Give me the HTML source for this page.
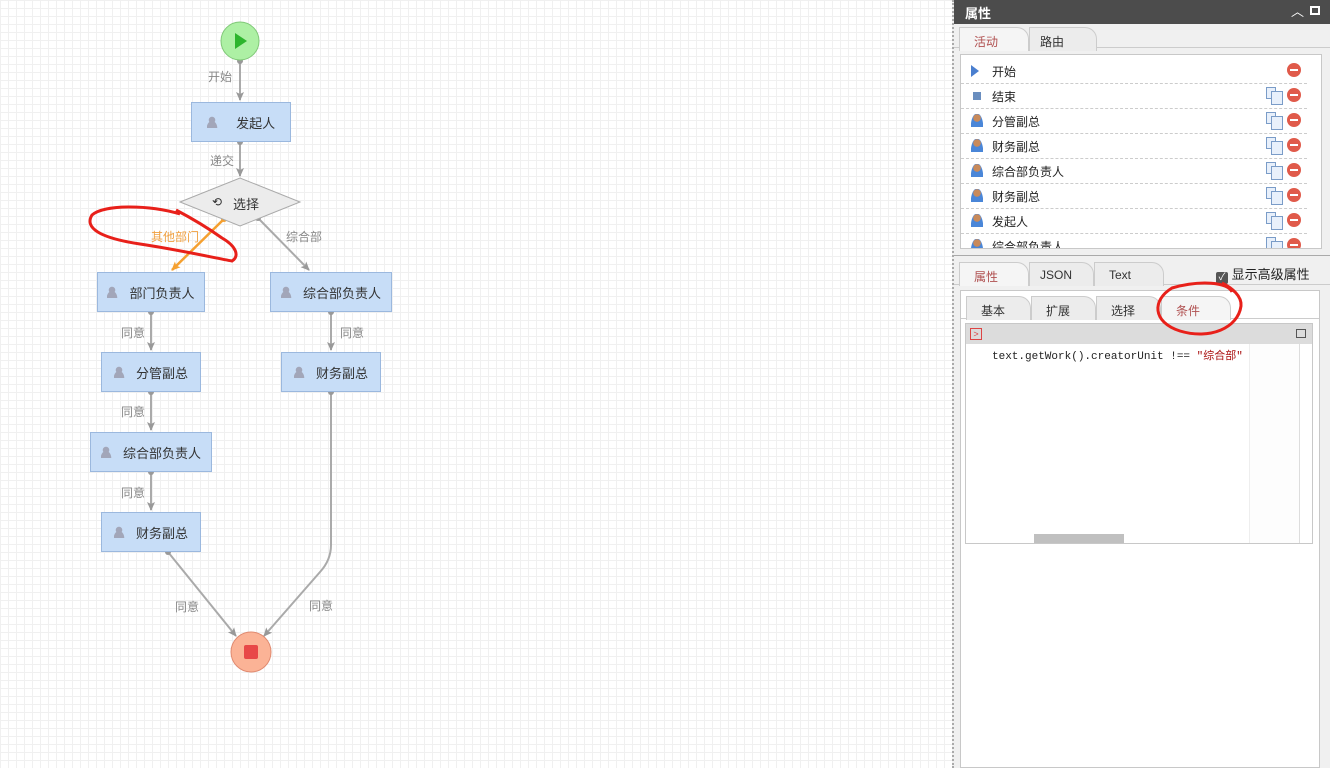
<!DOCTYPE html><html><head><meta charset="utf-8"><style>
*{margin:0;padding:0;box-sizing:border-box}
body{width:1330px;height:768px;overflow:hidden;position:relative;font-family:"Liberation Sans","Noto Sans CJK SC",sans-serif;font-size:13px;color:#333;
background-color:#fff;background-image:linear-gradient(#f0f0f0 1px,transparent 1px),linear-gradient(90deg,#f0f0f0 1px,transparent 1px);background-size:8px 8px}
.abs{position:absolute}
.box{position:absolute;background:#c7ddf7;border:1px solid #9bb8de;display:flex;align-items:center;justify-content:center;font-size:13px;color:#333}
.box i{display:inline-block;width:14px;height:12px;margin-right:8px;background:radial-gradient(circle at 5px 4px,#99a 3px,transparent 3.5px),radial-gradient(ellipse at 5px 12px,#99a 5px,transparent 5.5px);opacity:.8}
.lbl{position:absolute;font-size:12px;color:#888}
#panel{position:absolute;left:952px;top:0;width:378px;height:768px;background:#f0f0f0;border-left:2px dotted #aaa}
.tab{position:absolute;height:24px;border:1px solid #ccc;border-bottom:none;border-radius:0 12px 0 0;background:#ececec;font-size:12px;padding:5px 0 0 14px}
.row{position:absolute;left:0;width:346px;height:25px;border-bottom:1px dashed #ccc;font-size:12px;color:#222;padding:4px 0 0 31px}
.row .ic{position:absolute;left:10px;top:5px}
.del{position:absolute;left:326px;top:4px;width:14px;height:14px;border-radius:50%;background:#e05a4a}
.del:after{content:"";position:absolute;left:3px;top:6px;width:8px;height:2px;background:#fff}
.cp{position:absolute;left:305px;top:3px;width:10px;height:12px;border:1px solid #7a9cc8;background:#e8f0fb}
.cp:after{content:"";position:absolute;left:4px;top:3px;width:10px;height:12px;border:1px solid #7a9cc8;background:#e8f0fb}
.usr{width:12px;height:13px;background:radial-gradient(circle at 6px 4px,#c98a5a 3.5px,transparent 4px),radial-gradient(ellipse at 6px 13px,#4a86d8 6px,transparent 6.5px)}
</style></head><body>
<svg class="abs" style="left:0;top:0" width="950" height="768">
<defs><marker id="a" markerWidth="10" markerHeight="10" refX="8" refY="5" orient="auto" markerUnits="userSpaceOnUse"><path d="M0,1 L9,5 L0,9 L2,5Z" fill="#999"/></marker>
<marker id="o" markerWidth="10" markerHeight="10" refX="8" refY="5" orient="auto" markerUnits="userSpaceOnUse"><path d="M0,1 L9,5 L0,9 L2,5Z" fill="#f5a030"/></marker></defs>
<g stroke="#aaa" stroke-width="2" fill="none" marker-end="url(#a)">
<path d="M240,61 V100"/><path d="M240,142 V176"/><path d="M258,218 L309,270"/>
<path d="M151,312 V350"/><path d="M331,312 V350"/><path d="M151,392 V430"/><path d="M151,472 V510"/>
<path d="M168,552 L236,636"/><path d="M331,392 V545 Q331,560 320,572 L264,636"/>
</g>
<path d="M224,219 L172,270" stroke="#f5a030" stroke-width="2.5" marker-end="url(#o)"/>
<g fill="#999"><circle cx="240" cy="61" r="3"/><circle cx="240" cy="142" r="3"/><circle cx="258" cy="218" r="3"/><circle cx="151" cy="312" r="3"/><circle cx="331" cy="312" r="3"/><circle cx="151" cy="392" r="3"/><circle cx="331" cy="392" r="3"/><circle cx="151" cy="472" r="3"/><circle cx="168" cy="552" r="3"/></g>
<circle cx="224" cy="219" r="3" fill="#f5a030"/>
<circle cx="240" cy="41" r="19" fill="#adf0a4" stroke="#80c878"/><path d="M235,33 L247,41 L235,49Z" fill="#2db52d"/>
<path d="M180,202 L240,178 L300,202 L240,226Z" fill="#ececec" stroke="#aaa"/>
<text x="212" y="206" font-size="12" fill="#333">⟲</text>
<circle cx="251" cy="652" r="20" fill="#fbb396" stroke="#e08a70"/><rect x="244" y="645" width="14" height="14" rx="2" fill="#e84848"/>
</svg>
<div class="abs" style="left:233px;top:194px;font-size:13px">选择</div>
<div class="box" style="left:191px;top:102px;width:100px;height:40px"><i></i>&nbsp;&nbsp;发起人</div>
<div class="box" style="left:97px;top:272px;width:108px;height:40px"><i></i>部门负责人</div>
<div class="box" style="left:270px;top:272px;width:122px;height:40px"><i></i>综合部负责人</div>
<div class="box" style="left:101px;top:352px;width:100px;height:40px"><i></i>分管副总</div>
<div class="box" style="left:281px;top:352px;width:100px;height:40px"><i></i>财务副总</div>
<div class="box" style="left:90px;top:432px;width:122px;height:40px"><i></i>综合部负责人</div>
<div class="box" style="left:101px;top:512px;width:100px;height:40px"><i></i>财务副总</div>
<div class="lbl" style="left:208px;top:68px">开始</div>
<div class="lbl" style="left:210px;top:152px">递交</div>
<div class="lbl" style="left:151px;top:228px;color:#f0a040">其他部门</div>
<div class="lbl" style="left:286px;top:228px">综合部</div>
<div class="lbl" style="left:121px;top:324px">同意</div>
<div class="lbl" style="left:340px;top:324px">同意</div>
<div class="lbl" style="left:121px;top:403px">同意</div>
<div class="lbl" style="left:121px;top:484px">同意</div>
<div class="lbl" style="left:175px;top:598px">同意</div>
<div class="lbl" style="left:309px;top:597px">同意</div>

<div id="panel">
<div class="abs" style="left:0;top:0;width:376px;height:24px;background:#4c4c4c;color:#fff;font-weight:bold;font-size:13px;padding:3px 0 0 11px">属性<span style="position:absolute;right:26px;top:1px;font-weight:normal">︿</span><span style="position:absolute;right:10px;top:6px;width:10px;height:9px;border:2px solid #fff"></span></div>
<div class="abs" style="left:0;top:24px;width:376px;height:24px;border-bottom:1px solid #ccc"></div>
<div class="tab" style="left:5px;top:27px;width:70px;color:#b05050;background:#f5f5f5">活动</div>
<div class="tab" style="left:75px;top:27px;width:68px;color:#333;padding-left:10px">路由</div>
<div class="abs" style="left:6px;top:54px;width:362px;height:195px;background:#fff;border:1px solid #c8c8c8;overflow:hidden">
<div class="row" style="top:4px"><span class="ic" style="width:0;height:0;border-left:8px solid #4a7fcf;border-top:6px solid transparent;border-bottom:6px solid transparent;top:6px"></span>开始<span class="del"></span></div>
<div class="row" style="top:29px"><span class="ic" style="width:8px;height:8px;background:#6a8ebf;top:8px;left:12px"></span>结束<span class="cp"></span><span class="del"></span></div>
<div class="row" style="top:54px"><span class="ic usr"></span>分管副总<span class="cp"></span><span class="del"></span></div>
<div class="row" style="top:79px"><span class="ic usr"></span>财务副总<span class="cp"></span><span class="del"></span></div>
<div class="row" style="top:104px"><span class="ic usr"></span>综合部负责人<span class="cp"></span><span class="del"></span></div>
<div class="row" style="top:129px"><span class="ic usr"></span>财务副总<span class="cp"></span><span class="del"></span></div>
<div class="row" style="top:154px"><span class="ic usr"></span>发起人<span class="cp"></span><span class="del"></span></div>
<div class="row" style="top:179px"><span class="ic usr"></span>综合部负责人<span class="cp"></span><span class="del"></span></div>
</div>
<div class="abs" style="left:0;top:255px;width:376px;height:3px;border-top:1px solid #aaa"></div>
<div class="abs" style="left:0;top:284px;width:376px;border-bottom:1px solid #ccc"></div>
<div class="tab" style="left:5px;top:262px;width:70px;color:#b05050;background:#f5f5f5">属性</div>
<div class="tab" style="left:75px;top:262px;width:65px;padding-left:10px">JSON</div>
<div class="tab" style="left:140px;top:262px;width:70px">Text</div>
<div class="abs" style="left:262px;top:264px;font-size:13px;color:#222"><span style="display:inline-block;width:12px;height:12px;background:#555;border-radius:2px;color:#fff;font-size:10px;line-height:12px;text-align:center;vertical-align:-1px">✓</span> 显示高级属性</div>
<div class="abs" style="left:6px;top:290px;width:360px;height:478px;background:#fff;border:1px solid #c8c8c8">
<div class="abs" style="left:0;top:27px;width:358px;border-bottom:1px solid #ccc"></div>
<div class="tab" style="left:5px;top:5px;width:65px">基本</div>
<div class="tab" style="left:70px;top:5px;width:65px">扩展</div>
<div class="tab" style="left:135px;top:5px;width:65px">选择</div>
<div class="tab" style="left:200px;top:5px;width:70px;color:#b05050;background:#f5f5f5">条件</div>
<div class="abs" style="left:4px;top:32px;width:348px;height:221px;border:1px solid #c8c8c8;background:#fff;overflow:hidden">
<div class="abs" style="left:0;top:0;width:346px;height:20px;background:#dcdcdc"><span style="position:absolute;left:4px;top:4px;width:12px;height:12px;border:1px solid #d44;color:#d44;font-size:9px;line-height:10px;text-align:center">&gt;</span><span style="position:absolute;right:6px;top:5px;width:10px;height:9px;border:1px solid #555"></span></div>
<div class="abs" style="left:26px;top:23px;font-family:'Liberation Mono','Noto Sans CJK SC',monospace;font-size:11px;color:#222;white-space:nowrap">text.getWork().creatorUnit !== <span style="color:#a11">"综合部"</span></div>
<div class="abs" style="left:283px;top:20px;width:50px;height:199px;background:#fdfdfd;border-left:1px solid #eee"></div>
<div class="abs" style="left:333px;top:20px;width:13px;height:199px;border-left:1px solid #ddd;background:#fff"></div>
<div class="abs" style="left:68px;top:210px;width:90px;height:10px;background:#c0c0c0"></div>
</div>
</div>
</div>
<svg class="abs" style="left:0;top:0" width="1330" height="768">
<path d="M180,214 C150,205 105,204 92,215 C84,228 100,238 140,244 C180,250 215,258 232,261 C240,256 236,246 222,238 C208,228 195,220 176,210" stroke="#e8201a" stroke-width="3" fill="none"/>
<path d="M1232,292 C1228,282 1200,280 1172,288 C1152,300 1152,322 1180,331 C1210,340 1238,328 1241,306 C1242,296 1232,288 1222,283" stroke="#e8201a" stroke-width="3" fill="none"/>
</svg>
</body></html>
